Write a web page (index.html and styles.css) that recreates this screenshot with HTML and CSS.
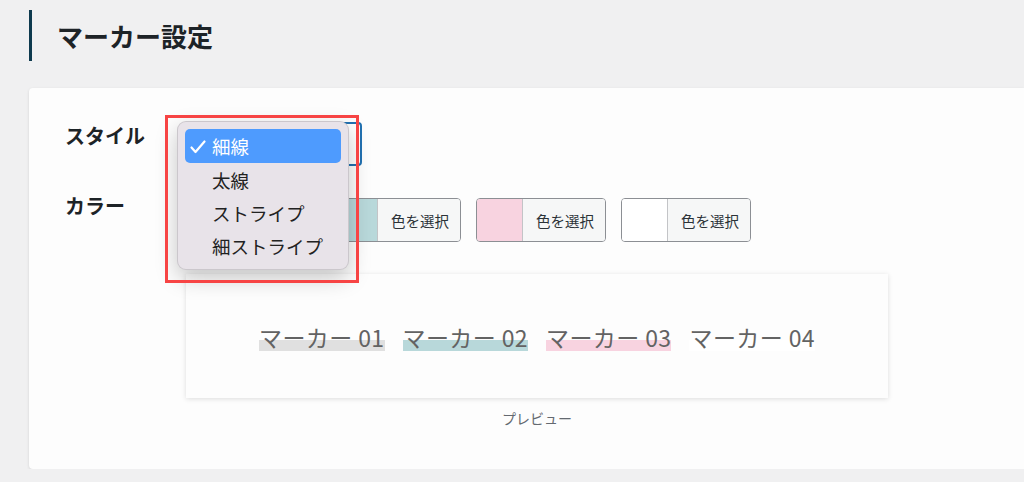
FILE: index.html
```html
<!DOCTYPE html>
<html lang="ja">
<head>
    <meta charset="UTF-8">
    <meta name="viewport" content="width=device-width, initial-scale=1.0">
    <title>マーカー設定</title>
    <link rel="stylesheet" href="styles.css">
</head>
<body>
    <div class="page">
        <h2 class="section-title">マーカー設定</h2>

        <div class="card">
            <div class="field-row">
                <div class="field-label">スタイル</div>
                <div class="select-wrap">
                    <div class="select-box"></div>

                    <!-- open dropdown (native menu look) -->
                    <div class="dropdown">
                        <div class="option selected">
                            <svg class="check" width="16" height="14" viewBox="0 0 16 14">
                                <polyline points="1.5,7.5 5.5,12 14.5,1.5" fill="none" stroke="#fff" stroke-width="2.2" stroke-linecap="round" stroke-linejoin="round"/>
                            </svg>
                            細線
                        </div>
                        <div class="option">太線</div>
                        <div class="option">ストライプ</div>
                        <div class="option">細ストライプ</div>
                    </div>
                    <div class="highlight-box"></div>
                </div>
            </div>

            <div class="field-row color-row">
                <div class="field-label">カラー</div>
                <div class="color-buttons">
                    <div class="color-button">
                        <span class="swatch swatch-gray"></span>
                        <span class="color-text">色を選択</span>
                    </div>
                    <div class="color-button">
                        <span class="swatch swatch-teal"></span>
                        <span class="color-text">色を選択</span>
                    </div>
                    <div class="color-button">
                        <span class="swatch swatch-pink"></span>
                        <span class="color-text">色を選択</span>
                    </div>
                    <div class="color-button">
                        <span class="swatch swatch-white"></span>
                        <span class="color-text">色を選択</span>
                    </div>
                </div>
            </div>

            <div class="preview">
                <div class="preview-box">
                    <span class="marker marker-gray">マーカー 01</span>
                    <span class="marker marker-teal">マーカー 02</span>
                    <span class="marker marker-pink">マーカー 03</span>
                    <span class="marker marker-white">マーカー 04</span>
                </div>
                <div class="preview-caption">プレビュー</div>
            </div>
        </div>
    </div>
</body>
</html>
```

FILE: styles.css
```css
body {
    margin: 0;
    padding: 0;
    background-color: #f0f0f1;
    font-family: "Noto Sans CJK JP", "Noto Sans", sans-serif;
    color: #1d2327;
    overflow: hidden;
}

.page {
    padding: 10px 0 0 29px;
}

.section-title {
    margin: 0;
    height: 51px;
    display: flex;
    align-items: center;
    border-left: 3px solid #0e3a4e;
    padding-left: 25px;
    font-size: 26px;
    font-weight: bold;
    color: #1d2327;
}

.card {
    margin-top: 27px;
    height: 381px;
    box-sizing: border-box;
    padding: 34px 0 0 36px;
    background-color: #fdfdfd;
    border-radius: 4px 0 0 4px;
    box-shadow: 0 1px 3px rgba(0, 0, 0, 0.12);
}

.field-row {
    display: grid;
    grid-template-columns: 121px 1fr;
    align-items: start;
}

.field-label {
    font-size: 20px;
    font-weight: bold;
    line-height: 28px;
    color: #1d2327;
}

.color-row {
    margin-top: 32px;
}

.color-row .field-label {
    margin-top: -6px;
}

.select-wrap {
    position: relative;
    width: 176px;
    height: 44px;
}

.select-box {
    width: 100%;
    height: 100%;
    box-sizing: border-box;
    border: 2px solid #2271b1;
    border-radius: 4px;
    background-color: #fff;
}

.dropdown {
    position: absolute;
    top: -1px;
    left: -9px;
    width: 172px;
    height: 149px;
    box-sizing: border-box;
    padding: 7px 7px;
    background-color: #e8e3e9;
    border: 1px solid rgba(0, 0, 0, 0.12);
    border-radius: 9px;
    box-shadow: 0 8px 22px rgba(0, 0, 0, 0.22);
    z-index: 5;
}

.option {
    height: 33px;
    display: flex;
    align-items: center;
    padding-left: 27px;
    font-size: 18.5px;
    color: #222;
    border-radius: 5px;
}

.option.selected {
    position: relative;
    height: 34px;
    background-color: #4e9bfe;
    color: #fff;
}

.check {
    position: absolute;
    left: 5px;
    top: 11px;
}

.highlight-box {
    position: absolute;
    top: -7px;
    left: -21px;
    width: 194px;
    height: 168px;
    box-sizing: border-box;
    border: 3px solid #f74444;
    z-index: 6;
}

.color-buttons {
    display: flex;
    gap: 15px;
}

.color-button {
    display: flex;
    width: 130px;
    height: 44px;
    box-sizing: border-box;
    border: 1px solid #8c8f94;
    border-radius: 4px;
    overflow: hidden;
}

.swatch {
    width: 45px;
    border-right: 1px solid #c3c4c7;
}

.swatch-gray { background-color: #e0e0e0; }
.swatch-teal { background-color: #b8d8da; }
.swatch-pink { background-color: #f8d3e0; }
.swatch-white { background-color: #ffffff; }

.color-text {
    flex: 1;
    display: flex;
    align-items: center;
    justify-content: center;
    padding-left: 2px;
    background-color: #f6f7f7;
    font-size: 14.5px;
    color: #2c3338;
}

.preview {
    margin: 32px 0 0 121px;
    width: 702px;
}

.preview-box {
    height: 124px;
    display: flex;
    justify-content: center;
    align-items: center;
    gap: 18px;
    padding-top: 2px;
    box-sizing: border-box;
    background-color: #fdfdfd;
    box-shadow: 0 1px 5px rgba(0, 0, 0, 0.13);
}

.marker {
    font-size: 23px;
    letter-spacing: 0.4px;
    color: #636363;
    line-height: 1.4;
}

.marker-gray { background: linear-gradient(transparent 58%, #e0e0e0 58%, #e0e0e0 95%, transparent 95%); }
.marker-teal { background: linear-gradient(transparent 58%, #b8d8da 58%, #b8d8da 95%, transparent 95%); }
.marker-pink { background: linear-gradient(transparent 58%, #f8d3e0 58%, #f8d3e0 95%, transparent 95%); }
.marker-white { background: linear-gradient(transparent 58%, #ffffff 58%, #ffffff 95%, transparent 95%); }

.preview-caption {
    margin-top: 10px;
    text-align: center;
    font-size: 14px;
    color: #646970;
}
```
